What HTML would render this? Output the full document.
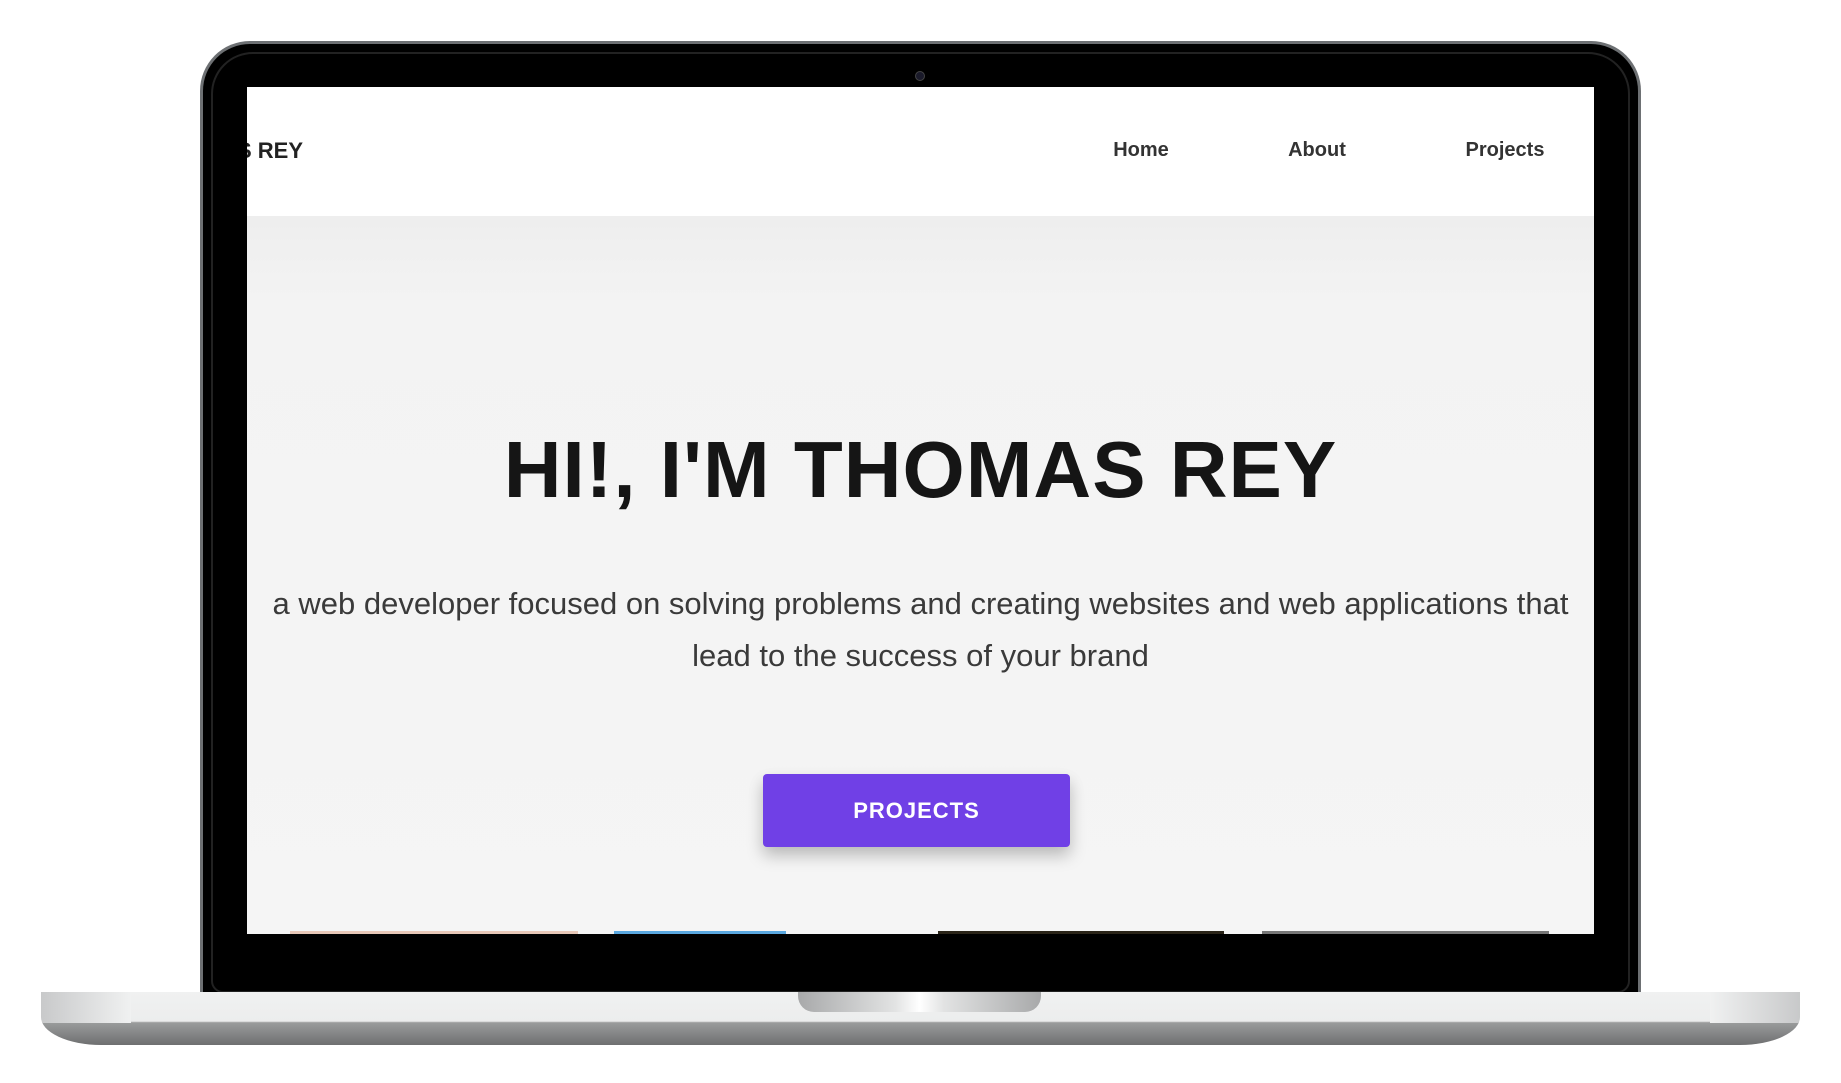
<!DOCTYPE html>
<html><head><meta charset="utf-8"><style>
html,body{margin:0;padding:0;background:#fff;}
body{width:1841px;height:1083px;position:relative;overflow:hidden;font-family:"Liberation Sans",sans-serif;}
.lid{position:absolute;left:200px;top:41px;width:1441px;height:960px;background:#000;border-radius:50px 50px 0 0;border:3px solid #6d7073;border-bottom:none;box-sizing:border-box;}
.lid:after{content:"";position:absolute;left:8px;top:8px;right:8px;bottom:8px;border:2px solid #222;border-radius:42px 42px 12px 12px;}
.cam{position:absolute;left:915px;top:71px;width:8px;height:8px;border-radius:50%;background:#1a1a2a;border:1px solid #444;}
.screen{position:absolute;left:247px;top:87px;width:1347px;height:847px;background:linear-gradient(#e6e6e6,#f3f3f3 25%,#f5f5f5);overflow:hidden;}
.hdr{position:absolute;left:0;top:0;width:100%;height:129px;background:#fff;}
.logo{position:absolute;left:-10px;top:51px;font-weight:bold;font-size:22px;color:#222;}
.nav{position:absolute;top:52px;font-weight:bold;font-size:20px;color:#333;transform:translateX(-50%);}
h1{position:absolute;left:0;width:100%;margin:0;transform:translateY(-50%);text-align:center;font-size:80px;font-weight:bold;color:#151515;letter-spacing:1px;top:383px;}
p{position:absolute;left:0;width:100%;top:491px;margin:0;text-align:center;font-size:31px;line-height:52px;color:#3a3a3a;}
.btn{position:absolute;left:516px;top:687px;width:307px;height:73px;background:#7040e6;border-radius:4px;box-shadow:0 8px 16px rgba(0,0,0,.25);color:#fff;font-weight:bold;font-size:22px;letter-spacing:1px;text-align:center;line-height:73px;}
.strip{position:absolute;top:844px;height:3px;}
.base{position:absolute;left:41px;top:992px;width:1759px;height:53px;border-radius:0 0 60px 60px/0 0 28px 28px;background:linear-gradient(#f0f1f1 0,#eceded 55%,#9a9b9c 58%,#6e6f70 100%);overflow:hidden;}
.base:before{content:"";position:absolute;left:0;top:0;width:90px;height:31px;background:linear-gradient(90deg,#c8c9ca,#f0f1f1);}
.base:after{content:"";position:absolute;right:0;top:0;width:90px;height:31px;background:linear-gradient(270deg,#c8c9ca,#f0f1f1);}
.notch{position:absolute;left:798px;top:992px;width:243px;height:20px;border-radius:0 0 16px 16px;background:linear-gradient(90deg,#a8a9aa,#e2e3e3 40%,#fff 50%,#e2e3e3 60%,#a8a9aa);}
</style></head><body>
<div class="lid"></div>
<div class="cam"></div>
<div class="screen">
  <div class="hdr">
    <div class="logo">S REY</div>
    <div class="nav" style="left:894px">Home</div>
    <div class="nav" style="left:1070px">About</div>
    <div class="nav" style="left:1258px">Projects</div>
  </div>
  <h1>HI!, I'M THOMAS REY</h1>
  <p>a web developer focused on solving problems and creating websites and web applications that<br>lead to the success of your brand</p>
  <div class="btn">PROJECTS</div>
  <div class="strip" style="left:43px;width:288px;background:#e8c8b8"></div>
  <div class="strip" style="left:367px;width:172px;background:#5aa8e0"></div>
  <div class="strip" style="left:691px;width:286px;background:#2a2418"></div>
  <div class="strip" style="left:1015px;width:287px;background:#777"></div>
</div>
<div class="base"></div>
<div class="notch"></div>
</body></html>
